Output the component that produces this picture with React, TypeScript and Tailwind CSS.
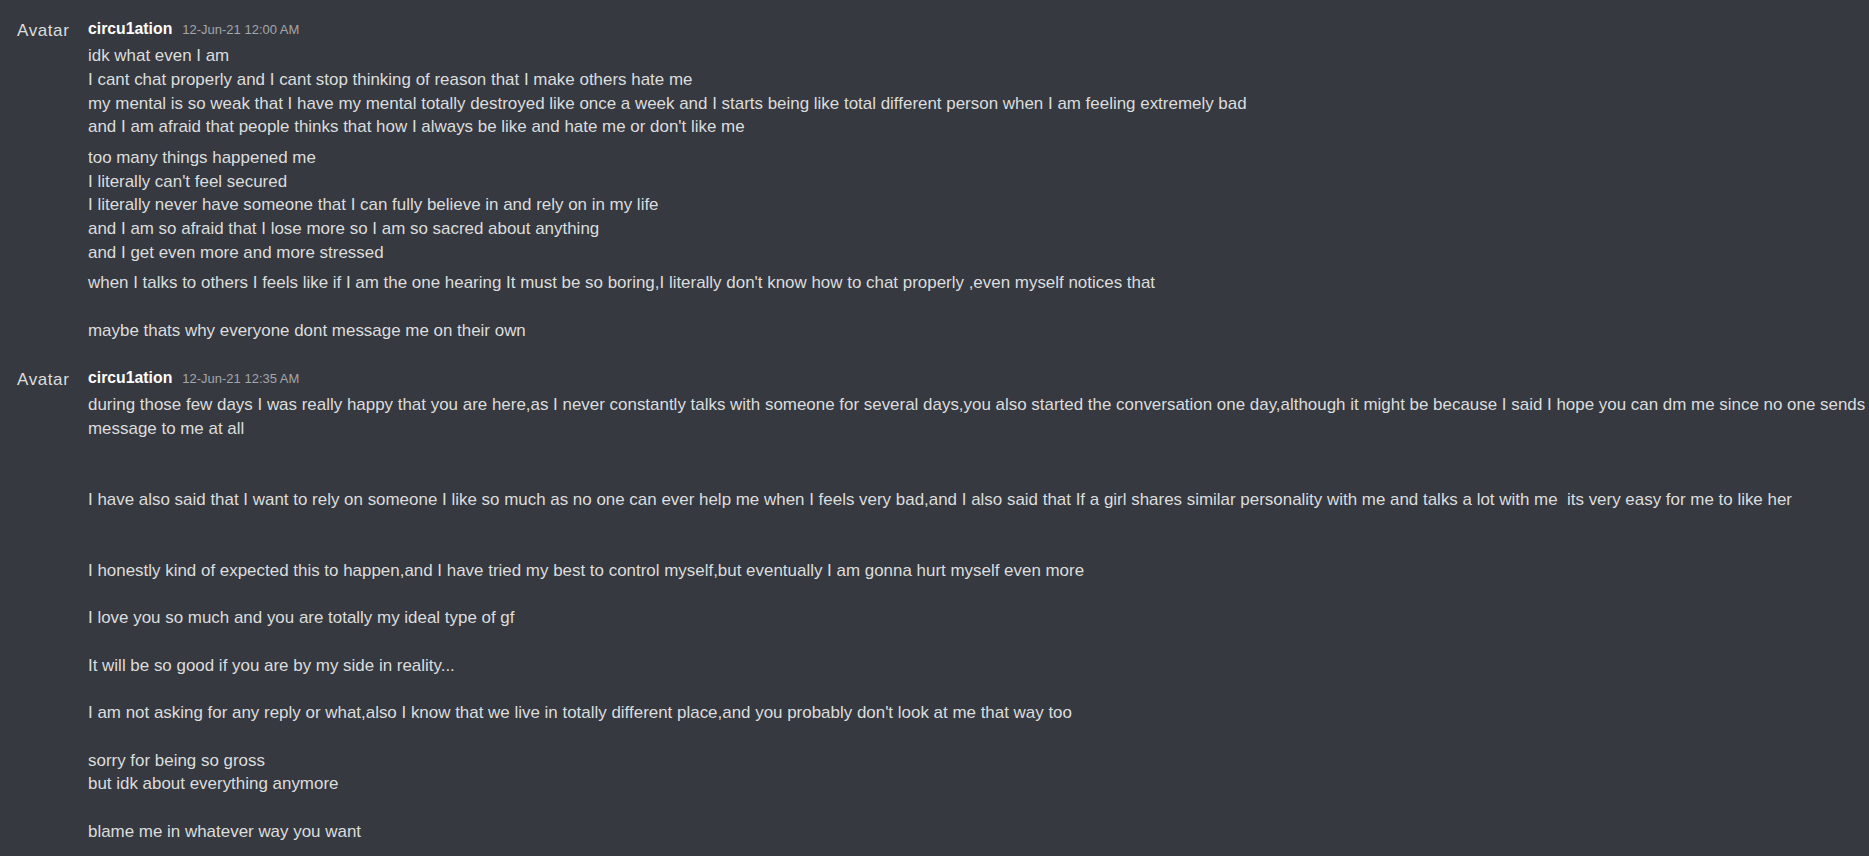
const groups = [
  {
    author: 'circu1ation',
    time: '12-Jun-21 12:00 AM',
    blocks: [
      [
        'idk what even I am',
        'I cant chat properly and I cant stop thinking of reason that I make others hate me',
        'my mental is so weak that I have my mental totally destroyed like once a week and I starts being like total different person when I am feeling extremely bad',
        "and I am afraid that people thinks that how I always be like and hate me or don't like me",
      ],
      [
        'too many things happened me',
        "I literally can't feel secured",
        'I literally never have someone that I can fully believe in and rely on in my life',
        'and I am so afraid that I lose more so I am so sacred about anything',
        'and I get even more and more stressed',
      ],
      [
        "when I talks to others I feels like if I am the one hearing It must be so boring,I literally don't know how to chat properly ,even myself notices that",
        '',
        'maybe thats why everyone dont message me on their own',
      ],
    ],
  },
  {
    author: 'circu1ation',
    time: '12-Jun-21 12:35 AM',
    blocks: [
      [
        'during those few days I was really happy that you are here,as I never constantly talks with someone for several days,you also started the conversation one day,although it might be because I said I hope you can dm me since no one sends',
        'message to me at all',
        '',
        '',
        'I have also said that I want to rely on someone I like so much as no one can ever help me when I feels very bad,and I also said that If a girl shares similar personality with me and talks a lot with me  its very easy for me to like her',
        '',
        '',
        'I honestly kind of expected this to happen,and I have tried my best to control myself,but eventually I am gonna hurt myself even more',
        '',
        'I love you so much and you are totally my ideal type of gf',
        '',
        'It will be so good if you are by my side in reality...',
        '',
        "I am not asking for any reply or what,also I know that we live in totally different place,and you probably don't look at me that way too",
        '',
        'sorry for being so gross',
        'but idk about everything anymore',
        '',
        'blame me in whatever way you want',
      ],
    ],
  },
];

export default function App() {
  return (
    <div className="min-h-screen w-full overflow-hidden bg-[#36393f] pt-[18px] font-['Liberation_Sans',Arial,sans-serif] text-[#dcddde]">
      {groups.map((g, i) => (
        <div key={i} className={i > 0 ? 'mt-[24.5px] flex' : 'flex'}>
          <div className="w-[88px] shrink-0 pl-[17px] pt-[1px] text-[17px] leading-[23.7px] tracking-[0.6px]">Avatar</div>
          <div className="min-w-0 flex-1">
            <div className="flex h-[22px] items-baseline leading-[22px]">
              <span className="text-[15.8px] font-bold text-white">{g.author}</span>
              <span className="ml-[10px] text-[13px] text-[#a3a6aa]">{g.time}</span>
            </div>
            <div className="mt-[4.3px] flex flex-col gap-[6.8px]">
              {g.blocks.map((b, j) => (
                <div key={j} className="whitespace-pre text-[16.95px] leading-[23.7px]">
                  {b.join('\n')}
                </div>
              ))}
            </div>
          </div>
        </div>
      ))}
    </div>
  );
}
